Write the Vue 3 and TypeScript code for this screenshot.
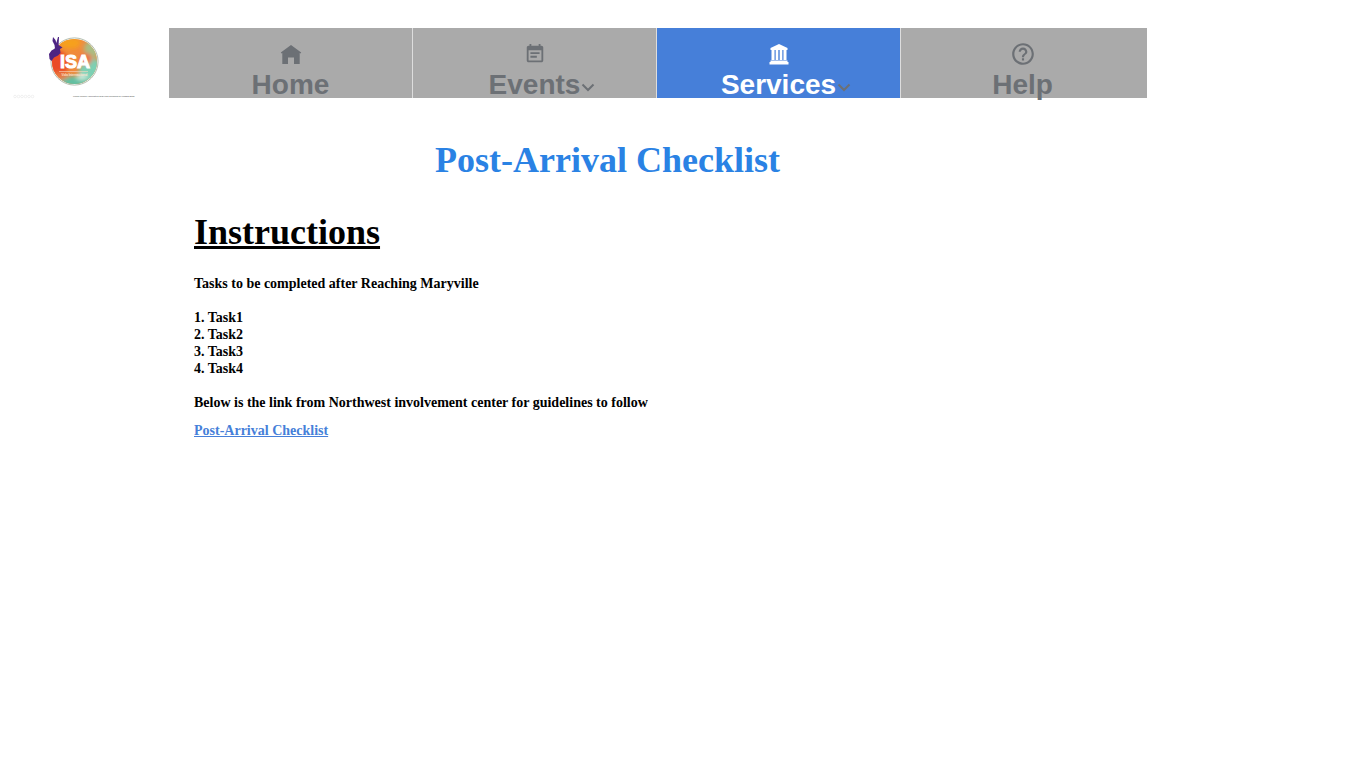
<script setup lang="ts">
interface NavItem {
  label: string
  icon: 'home' | 'events' | 'services' | 'help'
  menu: boolean
  active: boolean
}

const items: NavItem[] = [
  { label: 'Home', icon: 'home', menu: false, active: false },
  { label: 'Events', icon: 'events', menu: true, active: false },
  { label: 'Services', icon: 'services', menu: true, active: true },
  { label: 'Help', icon: 'help', menu: false, active: false },
]

const tasks: string[] = ['Task1', 'Task2', 'Task3', 'Task4']
</script>

<template>
  <div class="page">
    <header class="header">
      <a class="logo" href="#" aria-label="ISA">
        <svg width="136" height="76" viewBox="0 0 136 76">
          <defs>
            <clipPath id="disc"><circle cx="66.500" cy="33.500" r="22.600" /></clipPath>
            <filter id="wash" x="-30%" y="-30%" width="160%" height="160%"><feGaussianBlur stdDeviation="2" /></filter>
          </defs>
          <circle cx="66.500" cy="33.500" r="23.600" fill="#fff" stroke="#a9b5a6" stroke-width="0.900" />
          <g clip-path="url(#disc)">
            <rect x="42" y="9" width="50" height="50" fill="#f08a3c" />
            <g filter="url(#wash)">
              <ellipse cx="49" cy="36" rx="11" ry="14" fill="#ea4b25" />
              <ellipse cx="62" cy="15" rx="11" ry="6" fill="#f6a01a" />
              <ellipse cx="84" cy="21" rx="8" ry="9" fill="#a9bd84" />
              <ellipse cx="83" cy="43" rx="12" ry="13" fill="#7bd0b4" />
              <ellipse cx="67" cy="55" rx="16" ry="7" fill="#63bfa1" />
              <ellipse cx="78" cy="31" rx="6" ry="6" fill="#ee6f4a" />
              <ellipse cx="52" cy="48" rx="8" ry="4" fill="#e8793f" />
              <ellipse cx="74" cy="49" rx="6" ry="3" fill="#c9eadb" />
            </g>
          </g>
          <path d="M45 9 L47.500 12 L48.300 15 L50 9 L51 9 L50.600 17 L54.500 19.500 L52 21 L52.500 25 L50 27.500 L46 29.500 L43.500 33 L41.500 31 L41 26 L43.500 22.500 L47 20.500 L46.500 17 L44.500 13 Z" fill="#4d2483" />
          <text class="mark" x="67" y="40" text-anchor="middle">ISA</text>
          <path d="M51 43.500H80" stroke="#f7d8c2" stroke-width="0.600" />
          <text class="motto" x="66.500" y="48" text-anchor="middle">Vida Internacional</text>
          <text class="credit" x="65" y="69">Global Garden Association New Logo designed by Kumara Bhan</text>
          <g fill="none" stroke="#e3e3e3" stroke-width="0.500">
            <circle cx="7" cy="68.500" r="1.300" /><circle cx="10.500" cy="68.500" r="1.300" /><circle cx="14" cy="68.500" r="1.300" />
            <circle cx="17.500" cy="68.500" r="1.300" /><circle cx="21" cy="68.500" r="1.300" /><circle cx="24.500" cy="68.500" r="1.300" />
          </g>
        </svg>
      </a>
      <nav class="nav">
        <a v-for="item in items" :key="item.label" href="#" class="item" :class="{ active: item.active }">
          <span class="icon">
            <svg v-if="item.icon === 'home'" width="24" height="24" viewBox="0 0 24 24">
              <path d="M12 3 22.200 10.500 21.500 11.500 20.700 11V22H15V15.500H9V22H3.300V11L2.500 11.500 1.800 10.500Z" />
            </svg>
            <svg v-else-if="item.icon === 'events'" width="22" height="22" viewBox="0 0 24 24">
              <path d="M17 10H7v2h10v-2zm2-7h-1V1h-2v2H8V1H6v2H5c-1.110 0-1.990.900-1.990 2L3 19c0 1.100.890 2 2 2h14c1.100 0 2-.900 2-2V5c0-1.100-.900-2-2-2zm0 16H5V8h14v11zm-5-5H7v2h7v-2z" />
            </svg>
            <svg v-else-if="item.icon === 'services'" width="24" height="24" viewBox="0 0 24 24">
              <path d="M12 2 20.500 6V8H3.500V6ZM4.500 8H7.500V18H4.500ZM8.700 8H11.300V18H8.700ZM12.700 8H15.300V18H12.700ZM16.500 8H19.500V18H16.500ZM3.500 18.500H20.500V20H21.500V22.500H2.500V20H3.500Z" />
            </svg>
            <svg v-else width="26" height="26" viewBox="0 0 24 24">
              <path d="M11 18h2v-2h-2v2zm1-16C6.480 2 2 6.480 2 12s4.480 10 10 10 10-4.480 10-10S17.520 2 12 2zm0 18c-4.410 0-8-3.590-8-8s3.590-8 8-8 8 3.590 8 8-3.590 8-8 8zm0-14c-2.210 0-4 1.790-4 4h2c0-1.100.900-2 2-2s2 .900 2 2c0 2-3 1.750-3 5h2c0-2.250 3-2.500 3-5 0-2.210-1.790-4-4-4z" />
            </svg>
          </span>
          <span class="label">
            {{ item.label }}
            <svg v-if="item.menu" class="chevron" width="16" height="16" viewBox="0 0 16 16">
              <path d="M2.500 5.500 8 11 13.500 5.500" />
            </svg>
          </span>
        </a>
      </nav>
    </header>

    <main>
      <h1 class="title">Post-Arrival Checklist</h1>
      <section class="content">
        <h2>Instructions</h2>
        <p>Tasks to be completed after Reaching Maryville</p>
        <ol>
          <li v-for="(task, i) in tasks" :key="task">{{ i + 1 }}. {{ task }}</li>
        </ol>
        <p>Below is the link from Northwest involvement center for guidelines to follow</p>
        <a class="guide" href="#">Post-Arrival Checklist</a>
      </section>
    </main>
  </div>
</template>

<style scoped>
.page {
  font-family: "Liberation Serif", "Times New Roman", serif;
  font-weight: bold;
  font-size: 14px;
  line-height: 17px;
  color: #000;
}
.header {
  display: grid;
  grid-template-columns: 161px 1fr;
  align-items: start;
  padding: 28px 219px 0 8px;
}
.logo svg {
  display: block;
}
.mark {
  font: bold 18px "Liberation Sans", Arial, sans-serif;
  fill: #fff;
  stroke: #fff;
  stroke-width: 1px;
}
.motto {
  font: bold 3px "Liberation Sans", Arial, sans-serif;
  fill: #fbe3d0;
}
.credit {
  font: bold 2px "Liberation Sans", Arial, sans-serif;
  fill: #777;
}
.nav {
  display: grid;
  grid-template-columns: repeat(4, 1fr);
  height: 70px;
  padding-right: 2px;
  background: #aaa;
}
.item {
  box-sizing: border-box;
  height: 70px;
  padding-top: 14px;
  border-right: 1px solid #ddd;
  text-align: center;
  text-decoration: none;
  color: #6c7075;
  font-family: "Liberation Sans", Arial, sans-serif;
}
.item:last-child {
  border-right-color: transparent;
}
.item.active {
  background: #467fd9;
  color: #fff;
}
.icon {
  display: flex;
  align-items: center;
  justify-content: center;
  height: 24px;
  fill: currentColor;
}
.label {
  position: relative;
  display: inline-block;
  font-size: 28px;
  line-height: 38px;
}
.chevron {
  position: absolute;
  left: 100%;
  top: 13px;
  fill: none;
  stroke: #6c7075;
  stroke-width: 2;
}
.title {
  margin: 34px 151px 0 0;
  font-size: 36px;
  line-height: 44px;
  text-align: center;
  color: #2a82e4;
}
.content {
  padding: 28px 24px 0 194px;
}
h2 {
  margin: 0 0 21px;
  font-size: 36px;
  line-height: 44px;
  text-decoration: underline;
}
p {
  margin: 0;
}
ol {
  margin: 17px 0;
  padding: 0;
  list-style: none;
}
.guide {
  display: inline-block;
  margin-top: 11px;
  color: #467fd9;
}
</style>

<style>
body {
  background: #fff;
}
</style>
